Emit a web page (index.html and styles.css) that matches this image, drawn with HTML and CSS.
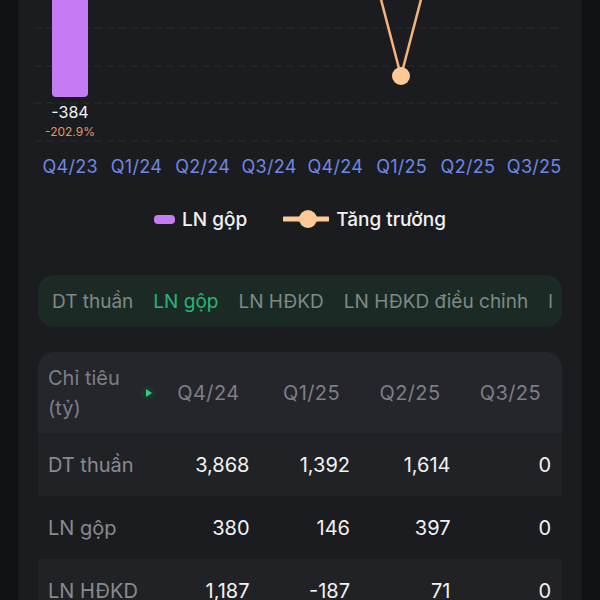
FILE: index.html
```html
<!DOCTYPE html>
<html lang="vi">
<head>
<meta charset="utf-8">
<title>LN gộp</title>
<link rel="stylesheet" href="styles.css">
</head>
<body>
<div class="page">
  <div class="chart">
    <svg class="plot" width="564" height="154" viewBox="0 0 564 154">
      <g class="grid">
        <line x1="17" y1="28" x2="542" y2="28"/>
        <line x1="17" y1="66" x2="542" y2="66"/>
        <line x1="17" y1="103" x2="542" y2="103"/>
        <line x1="17" y1="141" x2="542" y2="141"/>
      </g>
      <path class="bar" d="M34 -10 H70 V93 Q70 97 66 97 H38 Q34 97 34 93 Z"/>
      <text class="bar-val" x="52" y="118">-384</text>
      <text class="bar-pct" x="52" y="136">-202.9%</text>
      <polyline class="growth" points="360,-12 383,76 406,-12"/>
      <circle class="dot" cx="383" cy="76" r="9"/>
    </svg>
    <div class="xaxis">
      <span>Q4/23</span><span>Q1/24</span><span>Q2/24</span><span>Q3/24</span>
      <span>Q4/24</span><span>Q1/25</span><span>Q2/25</span><span>Q3/25</span>
    </div>
  </div>

  <div class="legend">
    <div class="lg-item"><span class="swatch"></span>LN gộp</div>
    <div class="lg-item">
      <svg class="lg-line" width="46" height="20" viewBox="0 0 46 20"><line x1="1" y1="10" x2="45" y2="10"/><circle cx="25" cy="10" r="9"/></svg>
      Tăng trưởng
    </div>
  </div>

  <div class="tabs">
    <div class="tabs-inner">
      <span class="tab">DT thuần</span>
      <span class="tab active">LN gộp</span>
      <span class="tab">LN HĐKD</span>
      <span class="tab">LN HĐKD điều chỉnh</span>
      <span class="tab">l</span>
    </div>
  </div>

  <div class="table">
    <div class="row head">
      <div class="cell label">Chỉ tiêu<br>(tỷ)<span class="expand"><svg width="8" height="10" viewBox="0 0 8 10"><path d="M1 1 L7 5 L1 9 Z"/></svg></span></div>
      <div class="cell">Q4/24</div>
      <div class="cell">Q1/25</div>
      <div class="cell">Q2/25</div>
      <div class="cell">Q3/25</div>
    </div>
    <div class="row alt">
      <div class="cell label">DT thuần</div>
      <div class="cell">3,868</div>
      <div class="cell">1,392</div>
      <div class="cell">1,614</div>
      <div class="cell">0</div>
    </div>
    <div class="row">
      <div class="cell label">LN gộp</div>
      <div class="cell">380</div>
      <div class="cell">146</div>
      <div class="cell">397</div>
      <div class="cell">0</div>
    </div>
    <div class="row alt">
      <div class="cell label">LN HĐKD</div>
      <div class="cell">1,187</div>
      <div class="cell">-187</div>
      <div class="cell">71</div>
      <div class="cell">0</div>
    </div>
  </div>
</div>
</body>
</html>
```

FILE: styles.css
```css
html, body {
  margin: 0;
  padding: 0;
  background: #111215;
  font-family: Inter, "Noto Sans", sans-serif;
}

.page {
  margin-left: 18px;
  width: 564px;
  height: 600px;
  background: #1b1c20;
  overflow: hidden;
}

.chart {
  display: flex;
  flex-direction: column;
}

.plot {
  display: block;
  overflow: hidden;
}

.grid line {
  stroke: #2a2c31;
  stroke-width: 1;
  stroke-dasharray: 7 5;
}

.bar {
  fill: #c57bf3;
}

.bar-val {
  fill: #f2f2f2;
  font-size: 16px;
  font-weight: 400;
  text-anchor: middle;
}

.bar-pct {
  fill: #e29a5e;
  font-size: 12px;
  text-anchor: middle;
}

.growth {
  fill: none;
  stroke: #f3b57c;
  stroke-width: 2.5;
}

.dot {
  fill: #fdc997;
}

.xaxis {
  display: flex;
  padding-left: 19px;
  height: 24px;
  align-items: center;
}

.xaxis span {
  width: 66.3px;
  text-align: center;
  color: #6e88e4;
  font-size: 18px;
  letter-spacing: 0.3px;
  flex: none;
}

.legend {
  margin-top: 29px;
  height: 24px;
  display: flex;
  justify-content: center;
  gap: 36px;
  color: #f2f2f2;
  font-size: 19px;
  font-weight: 500;
}

.lg-item {
  display: flex;
  align-items: center;
  gap: 7px;
}

.swatch {
  width: 21px;
  height: 9px;
  border-radius: 4px;
  background: #c57bf3;
}

.lg-line line {
  stroke: #fdc997;
  stroke-width: 5;
  stroke-linecap: round;
}

.lg-line circle {
  fill: #fdc997;
}

.tabs {
  margin: 44px 20px 0;
  height: 52px;
  border-radius: 16px;
  background: #1c2a26;
  padding: 0 10px 0 14px;
  display: flex;
  align-items: center;
}

.tabs-inner {
  display: flex;
  gap: 20px;
  overflow: hidden;
  white-space: nowrap;
  width: 100%;
}

.tab {
  flex: none;
  font-size: 19px;
  color: #7e8986;
}

.tab.active {
  color: #25b676;
}

.table {
  margin: 25px 20px 0;
  border-radius: 16px 16px 0 0;
  overflow: hidden;
}

.row {
  display: grid;
  grid-template-columns: 111px repeat(4, 100.5px);
  padding-right: 11px;
  height: 63px;
  align-items: center;
  font-size: 20px;
  color: #f2f2f2;
  font-weight: 400;
}

.row.head {
  height: 81px;
  background: #25262b;
  color: #7c7f87;
  letter-spacing: 0.4px;
}

.row.alt {
  background: #212226;
}

.cell {
  text-align: right;
}

.head .cell {
  padding-right: 10px;
}

.cell.label {
  text-align: left;
  padding-left: 10px;
  color: #878a91;
  position: relative;
}

.head .cell.label {
  line-height: 30px;
  color: #7c7f87;
  letter-spacing: 0;
}

.expand {
  position: absolute;
  right: -6px;
  top: 50%;
  width: 14px;
  height: 14px;
  margin-top: -7px;
  border-radius: 50%;
  background: #20332b;
  display: flex;
  align-items: center;
  justify-content: center;
}

.expand svg {
  display: block;
  margin-left: 2px;
}

.expand path {
  fill: #2fd27c;
}
```
